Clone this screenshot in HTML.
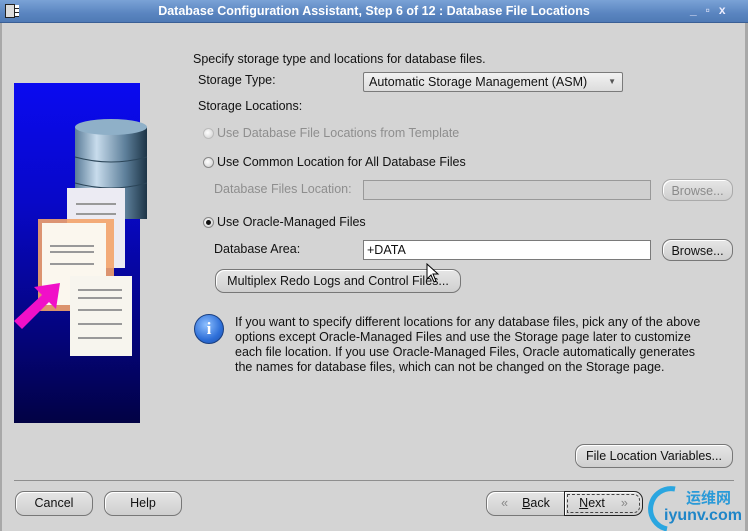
<!DOCTYPE html>
<html><head><meta charset="utf-8"><style>
*{margin:0;padding:0;box-sizing:border-box}
body{width:748px;height:531px;overflow:hidden;background:#d4d4d4;font-family:"Liberation Sans","DejaVu Sans",sans-serif;font-size:12.5px;color:#111;position:relative}
.a{position:absolute;white-space:nowrap}
.title{left:0;top:0;width:748px;height:23px;background:linear-gradient(#7aa2d6,#5a85c0 60%,#4f7ab5);border-bottom:1px solid #3a5f95;color:#fff;font-weight:bold;font-size:12.5px;text-align:center;line-height:23px}
.btn{position:absolute;border:1px solid #777;border-radius:9px;background:linear-gradient(#e6e6e6,#cfcfcf);text-align:center;line-height:22px;box-shadow:inset 1px 1px 0 #fff}
.dis{color:#8a8a8a;border-color:#aaa}
.field{position:absolute;border:1px solid #7a7a7a;background:#fff;height:20px;padding-left:3px;line-height:18px}
.radio{position:absolute;width:11px;height:11px;border-radius:50%;border:1px solid #888;background:radial-gradient(circle at 40% 40%,#fff,#ccc)}
.g{color:#8e8e8e}
</style></head><body>
<div style="position:absolute;left:0;top:0;width:748px;height:531px;border-left:2px solid #a8a8a8;border-right:3px solid #a8a8a8"></div>
<div class="a title">Database Configuration Assistant, Step 6 of 12 : Database File Locations</div>
<div class="a" style="left:5px;top:4px;width:10px;height:14px;border:1px solid #222;background:#ddd"></div>
<div class="a" style="left:15px;top:5px;width:4px;height:12px;background:repeating-linear-gradient(#fff 0 3px,#222 3px 4px)"></div>
<div class="a" style="left:690px;top:3px;color:#eef;font-weight:bold;font-size:12px;letter-spacing:9px">_▫x</div>

<!-- left image -->
<div class="a" style="left:14px;top:83px;width:126px;height:340px;background:linear-gradient(#0a0af0 0%,#0808c8 35%,#04047a 75%,#020244 100%)"></div>
<svg class="a" style="left:14px;top:83px" width="140" height="340">
<defs><linearGradient id="cy" x1="0" x2="1"><stop offset="0" stop-color="#5a7c98"/><stop offset=".3" stop-color="#c8dcec"/><stop offset=".7" stop-color="#5d7f9a"/><stop offset="1" stop-color="#1d3446"/></linearGradient></defs>
<rect x="61" y="44" width="72" height="92" fill="url(#cy)"/>
<ellipse cx="97" cy="44" rx="36" ry="8" fill="#8fb0c8"/>
<path d="M61 74 Q97 84 133 74 M61 100 Q97 110 133 100" stroke="#2b4558" fill="none"/>
<rect x="53" y="105" width="58" height="80" fill="#ecebf3"/>
<rect x="24" y="136" width="76" height="92" fill="#f4a46a" opacity=".9"/>
<rect x="28" y="140" width="64" height="82" fill="#fbf7ee"/>
<rect x="56" y="193" width="62" height="80" fill="#f7f5ee"/>
<g fill="#999"><rect x="36" y="162" width="44" height="2"/><rect x="36" y="168" width="44" height="2"/><rect x="36" y="180" width="44" height="2"/><rect x="64" y="206" width="44" height="2"/><rect x="64" y="214" width="44" height="2"/><rect x="64" y="226" width="44" height="2"/><rect x="64" y="240" width="44" height="2"/><rect x="64" y="254" width="44" height="2"/><rect x="62" y="120" width="40" height="2"/><rect x="62" y="130" width="40" height="2"/></g>
<path d="M0 238 L28 212 L20 204 L46 200 L42 226 L35 219 L8 246 Z" fill="#f010c8"/>
</svg>

<div class="a" style="left:193px;top:52px">Specify storage type and locations for database files.</div>
<div class="a" style="left:198px;top:73px">Storage Type:</div>
<div class="field" style="left:363px;top:72px;width:260px;background:linear-gradient(#f2f2f2,#dcdcdc);border-radius:2px;padding-left:5px">Automatic Storage Management (ASM)<span style="position:absolute;right:6px;top:0;font-size:8px;color:#555">▼</span></div>
<div class="a" style="left:198px;top:99px">Storage Locations:</div>
<div class="radio" style="left:203px;top:128px;border-color:#bbb"></div>
<div class="a g" style="left:217px;top:126px">Use Database File Locations from Template</div>
<div class="radio" style="left:203px;top:157px"></div>
<div class="a" style="left:217px;top:155px">Use Common Location for All Database Files</div>
<div class="a g" style="left:214px;top:182px">Database Files Location:</div>
<div class="field" style="left:363px;top:180px;width:288px;background:#d0d0d0;border-color:#999"></div>
<div class="btn dis" style="left:662px;top:179px;width:71px;height:22px">Browse...</div>
<div class="radio" style="left:203px;top:217px"></div>
<div class="a" style="left:206px;top:220px;width:5px;height:5px;border-radius:50%;background:#111"></div>
<div class="a" style="left:217px;top:215px">Use Oracle-Managed Files</div>
<div class="a" style="left:214px;top:242px">Database Area:</div>
<div class="field" style="left:363px;top:240px;width:288px">+DATA</div>
<div class="btn" style="left:662px;top:239px;width:71px;height:22px">Browse...</div>
<div class="btn" style="left:215px;top:269px;width:246px;height:24px">Multiplex Redo Logs and Control Files...</div>
<svg class="a" style="left:426px;top:263px" width="14" height="20"><path d="M1 1 L1 16 L5 12 L8 19 L10 18 L7 11 L12 11 Z" fill="#fff" stroke="#000"/></svg>

<div class="a" style="left:194px;top:314px;width:30px;height:30px;border-radius:50%;background:radial-gradient(circle at 40% 35%,#8ec0ff,#2e6fd8 60%,#1c4ea8);border:1px solid #1a3f80;color:#fff;font:bold 17px 'Liberation Serif',serif;text-align:center;line-height:28px">i</div>
<div class="a" style="left:235px;top:315px;line-height:15px">If you want to specify different locations for any database files, pick any of the above<br>options except Oracle-Managed Files and use the Storage page later to customize<br>each file location. If you use Oracle-Managed Files, Oracle automatically generates<br>the names for database files, which can not be changed on the Storage page.</div>

<div class="btn" style="left:575px;top:444px;width:158px;height:24px">File Location Variables...</div>
<div class="a" style="left:14px;top:480px;width:720px;height:1px;background:#8e8e8e"></div>
<div class="btn" style="left:15px;top:491px;width:78px;height:25px">Cancel</div>
<div class="btn" style="left:104px;top:491px;width:78px;height:25px">Help</div>
<div class="btn" style="left:486px;top:491px;width:79px;height:25px;border-radius:9px 0 0 9px"><span style="color:#888;margin-right:14px">«</span><u>B</u>ack</div>
<div class="btn" style="left:564px;top:491px;width:79px;height:25px;border-radius:0 9px 9px 0;border:1px solid #222;outline:1px dashed #444;outline-offset:-4px"><u>N</u>ext<span style="color:#888;margin-left:16px">»</span></div>

<svg class="a" style="left:645px;top:485px" width="40" height="46"><path d="M30 4 A20 20 0 1 0 22 44" stroke="#2aa6e0" stroke-width="5" fill="none"/></svg>
<div class="a" style="left:686px;top:487px;color:#2a9ad8;font:bold 15px 'Noto Sans CJK SC',sans-serif">运维网</div>
<div class="a" style="left:664px;top:507px;color:#1f86c8;font:bold 16px 'Liberation Sans',sans-serif">iyunv.com</div>
</body></html>
